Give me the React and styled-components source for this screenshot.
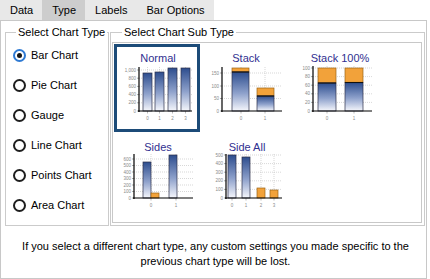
import React from "react";
import styled, { createGlobalStyle } from "styled-components";

const GlobalStyle = createGlobalStyle`
  body {
    margin: 0;
    background: #fff;
    font-family: "Liberation Sans", Arial, sans-serif;
    font-size: 11px;
    color: #000;
  }
`;

const Root = styled.div`
  width: 430px;
  height: 279px;
  overflow: hidden;
  background: #fff;
`;

const TabBar = styled.div`
  display: flex;
  height: 20px;
`;

const Tab = styled.div`
  padding: 0 9px 0 10px;
  line-height: 20px;
  font-size: 11px;
  background: ${(p) => (p.$active ? "#cdcdcd" : "#e8e8e8")};
  color: #000;
  white-space: nowrap;
`;

const Panel = styled.div`
  width: 427px;
  height: 259px;
  box-sizing: border-box;
  border: 1px solid #c8c8c8;
  padding: 5px 0 0 4px;
`;

const Groups = styled.div`
  display: flex;
  gap: 1px;
`;

const GroupBox = styled.fieldset`
  margin: 0;
  min-width: 0;
  box-sizing: border-box;
  width: ${(p) => p.$w}px;
  height: 200px;
  border: 1px solid #cbcbcb;
  padding: ${(p) => p.$pad};
`;

const Legend = styled.legend`
  margin-left: ${(p) => p.$indent}px;
  padding: 0 2px;
  font-size: 11px;
  line-height: 13px;
  white-space: nowrap;
`;

const RadioList = styled.div`
  display: flex;
  flex-direction: column;
`;

const RadioRow = styled.label`
  display: flex;
  align-items: center;
  gap: 5px;
  height: 30px;
  font-size: 11px;
  white-space: nowrap;
`;

const RadioCircle = styled.span`
  flex: none;
  width: 13px;
  height: 13px;
  box-sizing: border-box;
  border-radius: 50%;
  border: 2px solid ${(p) => (p.$checked ? "#2f7ad3" : "#1e1e1e")};
  background: #fff;
  display: flex;
  align-items: center;
  justify-content: center;
  &::after {
    content: "";
    width: 5px;
    height: 5px;
    border-radius: 50%;
    background: ${(p) => (p.$checked ? "#151515" : "transparent")};
  }
`;

const Gallery = styled.div`
  width: 310px;
  height: 181px;
  box-sizing: border-box;
  border: 1px solid #c8c8c8;
  background: #fff;
  display: grid;
  grid-template-columns: 95px 90px 115px;
  grid-template-rows: 89px 89px;
`;

const Cell = styled.div`
  position: relative;
`;

const SelectFrame = styled.div`
  position: absolute;
  left: 1px;
  top: 1px;
  width: 86px;
  height: 88px;
  box-sizing: border-box;
  border: 3px solid #1c4b78;
`;

const ChartSvg = styled.svg`
  display: block;
  overflow: visible;
`;

const Footnote = styled.p`
  margin: 13px 0 0;
  text-align: center;
  font-size: 11px;
  line-height: 15px;
`;

const FONT = '"Liberation Sans", Arial, sans-serif';

function Chart({ id, w, c }) {
  const gid = `grad-${id}`;
  return (
    <ChartSvg width={w} height={89} viewBox={`0 0 ${w} 89`}>
      <defs>
        <linearGradient id={gid} x1="0" y1="0" x2="0" y2="1">
          <stop offset="0" stopColor="#2d4d8e" />
          <stop offset="0.55" stopColor="#8fa2cc" />
          <stop offset="1" stopColor="#f6f7fc" />
        </linearGradient>
      </defs>
      <text
        x={c.titleX}
        y={19}
        textAnchor="middle"
        fontSize="11"
        fontFamily={FONT}
        fill="#303090"
      >
        {c.title}
      </text>
      {c.yTicks.map((t) => (
        <g key={t.label}>
          {t.label !== "0" && (
            <line
              x1={c.axisX}
              x2={c.axisEnd}
              y1={t.y}
              y2={t.y}
              stroke="#bdbdbd"
              strokeWidth="0.6"
              strokeDasharray="1 1"
            />
          )}
          <line x1={c.axisX - 2} x2={c.axisX} y1={t.y} y2={t.y} stroke="#555" strokeWidth="0.5" />
          <text
            x={c.axisX - 3}
            y={t.y + 1.6}
            textAnchor="end"
            fontSize="4.5"
            fontFamily={FONT}
            fill="#8a8a8a"
          >
            {t.label}
          </text>
        </g>
      ))}
      {c.xTicks.map((t) => (
        <g key={t.label}>
          <line
            x1={t.x}
            x2={t.x}
            y1={c.axisTop}
            y2={c.base}
            stroke="#bdbdbd"
            strokeWidth="0.6"
            strokeDasharray="1 1"
          />
          <line x1={t.x} x2={t.x} y1={c.base} y2={c.base + 2.5} stroke="#777" strokeWidth="0.5" />
          <text
            x={t.x}
            y={c.base + 9}
            textAnchor="middle"
            fontSize="4.5"
            fontFamily={FONT}
            fill="#8a8a8a"
          >
            {t.label}
          </text>
        </g>
      ))}
      {c.bars.map((b, i) => (
        <g key={i}>
          {b.seg.map((s, j) => (
            <rect
              key={j}
              x={b.x}
              y={s.from}
              width={b.w}
              height={s.to - s.from}
              fill={s.kind === "orange" ? "#f2a23a" : `url(#${gid})`}
              stroke={s.kind === "orange" ? "#9a6418" : "#2b2f48"}
              strokeWidth="0.7"
            />
          ))}
          {b.seg.length > 1 && (
            <line
              x1={b.x}
              x2={b.x + b.w}
              y1={b.seg[1].from}
              y2={b.seg[1].from}
              stroke="#111"
              strokeWidth="1.1"
            />
          )}
        </g>
      ))}
      <line x1={c.axisX} x2={c.axisX} y1={c.axisTop} y2={c.base + 1} stroke="#000" strokeWidth="1.2" />
      <line x1={c.axisX - 1} x2={c.axisEnd} y1={c.base} y2={c.base} stroke="#000" strokeWidth="1.2" />
    </ChartSvg>
  );
}

const blue = (from, to) => ({ kind: "blue", from, to });
const orange = (from, to) => ({ kind: "orange", from, to });

const charts = [
  {
    id: "normal",
    w: 95,
    selected: true,
    c: {
      title: "Normal",
      titleX: 45,
      axisX: 26,
      axisEnd: 79,
      axisTop: 24,
      base: 68,
      yTicks: [
        { label: "1,000", y: 27 },
        { label: "800", y: 35.2 },
        { label: "600", y: 43.4 },
        { label: "400", y: 51.6 },
        { label: "200", y: 59.8 },
        { label: "0", y: 68 },
      ],
      xTicks: [
        { label: "0", x: 34.5 },
        { label: "1", x: 46.5 },
        { label: "2", x: 59.5 },
        { label: "3", x: 72.5 },
      ],
      bars: [
        { x: 30, w: 9, seg: [blue(30, 68)] },
        { x: 42, w: 9, seg: [blue(29, 68)] },
        { x: 55, w: 9, seg: [blue(25, 68)] },
        { x: 68, w: 9, seg: [blue(25, 68)] },
      ],
    },
  },
  {
    id: "stack",
    w: 90,
    c: {
      title: "Stack",
      titleX: 38,
      axisX: 14,
      axisEnd: 74,
      axisTop: 24,
      base: 68,
      yTicks: [
        { label: "150", y: 30 },
        { label: "100", y: 43 },
        { label: "50", y: 55.5 },
        { label: "0", y: 68 },
      ],
      xTicks: [
        { label: "0", x: 33 },
        { label: "1", x: 57 },
      ],
      bars: [
        { x: 24, w: 17, seg: [orange(25, 29), blue(29, 68)] },
        { x: 49, w: 17, seg: [orange(45, 53), blue(53, 68)] },
      ],
    },
  },
  {
    id: "stack100",
    w: 115,
    c: {
      title: "Stack 100%",
      titleX: 42,
      axisX: 15,
      axisEnd: 74,
      axisTop: 23,
      base: 68,
      yTicks: [
        { label: "100", y: 25 },
        { label: "80", y: 33.6 },
        { label: "60", y: 42.2 },
        { label: "40", y: 50.8 },
        { label: "20", y: 59.4 },
        { label: "0", y: 68 },
      ],
      xTicks: [
        { label: "0", x: 29 },
        { label: "1", x: 56 },
      ],
      bars: [
        { x: 20, w: 18, seg: [orange(25, 40), blue(40, 68)] },
        { x: 47, w: 18, seg: [orange(25, 39.5), blue(39.5, 68)] },
      ],
    },
  },
  {
    id: "sides",
    w: 95,
    c: {
      title: "Sides",
      titleX: 45,
      axisX: 21,
      axisEnd: 80,
      axisTop: 22,
      base: 66,
      yTicks: [
        { label: "600", y: 27 },
        { label: "500", y: 33.5 },
        { label: "400", y: 40 },
        { label: "300", y: 46.5 },
        { label: "200", y: 53 },
        { label: "100", y: 59.5 },
        { label: "0", y: 66 },
      ],
      xTicks: [
        { label: "0", x: 38 },
        { label: "1", x: 63 },
      ],
      bars: [
        { x: 30, w: 8, seg: [blue(30, 66)] },
        { x: 38, w: 8, seg: [orange(61, 66)] },
        { x: 56, w: 8, seg: [blue(23, 66)] },
      ],
    },
  },
  {
    id: "sideall",
    w: 90,
    c: {
      title: "Side All",
      titleX: 39,
      axisX: 18,
      axisEnd: 74,
      axisTop: 22,
      base: 66,
      yTicks: [
        { label: "500", y: 23 },
        { label: "400", y: 31.6 },
        { label: "300", y: 40.2 },
        { label: "200", y: 48.8 },
        { label: "100", y: 57.4 },
        { label: "0", y: 66 },
      ],
      xTicks: [
        { label: "0", x: 24 },
        { label: "1", x: 38 },
        { label: "2", x: 53 },
        { label: "3", x: 66 },
      ],
      bars: [
        { x: 20, w: 8, seg: [blue(23, 66)] },
        { x: 34, w: 8, seg: [blue(25, 66)] },
        { x: 49, w: 8, seg: [orange(56, 66)] },
        { x: 62, w: 8, seg: [orange(58, 66)] },
      ],
    },
  },
];

const tabs = ["Data", "Type", "Labels", "Bar Options"];
const types = ["Bar Chart", "Pie Chart", "Gauge", "Line Chart", "Points Chart", "Area Chart"];

export default function App() {
  return (
    <Root>
      <GlobalStyle />
      <TabBar>
        {tabs.map((t) => (
          <Tab key={t} $active={t === "Type"}>
            {t}
          </Tab>
        ))}
      </TabBar>
      <Panel>
        <Groups>
          <GroupBox $w={104} $pad="1px 0 0 7px">
            <Legend $indent={3}>Select Chart Type</Legend>
            <RadioList>
              {types.map((t, i) => (
                <RadioRow key={t}>
                  <RadioCircle $checked={i === 0} />
                  {t}
                </RadioRow>
              ))}
            </RadioList>
          </GroupBox>
          <GroupBox $w={315} $pad="3px 2px 0 1px">
            <Legend $indent={10}>Select Chart Sub Type</Legend>
            <Gallery>
              {charts.map((ch) => (
                <Cell key={ch.id}>
                  <Chart id={ch.id} w={ch.w} c={ch.c} />
                  {ch.selected && <SelectFrame />}
                </Cell>
              ))}
            </Gallery>
          </GroupBox>
        </Groups>
        <Footnote>
          If you select a different chart type, any custom settings you made specific to the
          <br />
          previous chart type will be lost.
        </Footnote>
      </Panel>
    </Root>
  );
}
